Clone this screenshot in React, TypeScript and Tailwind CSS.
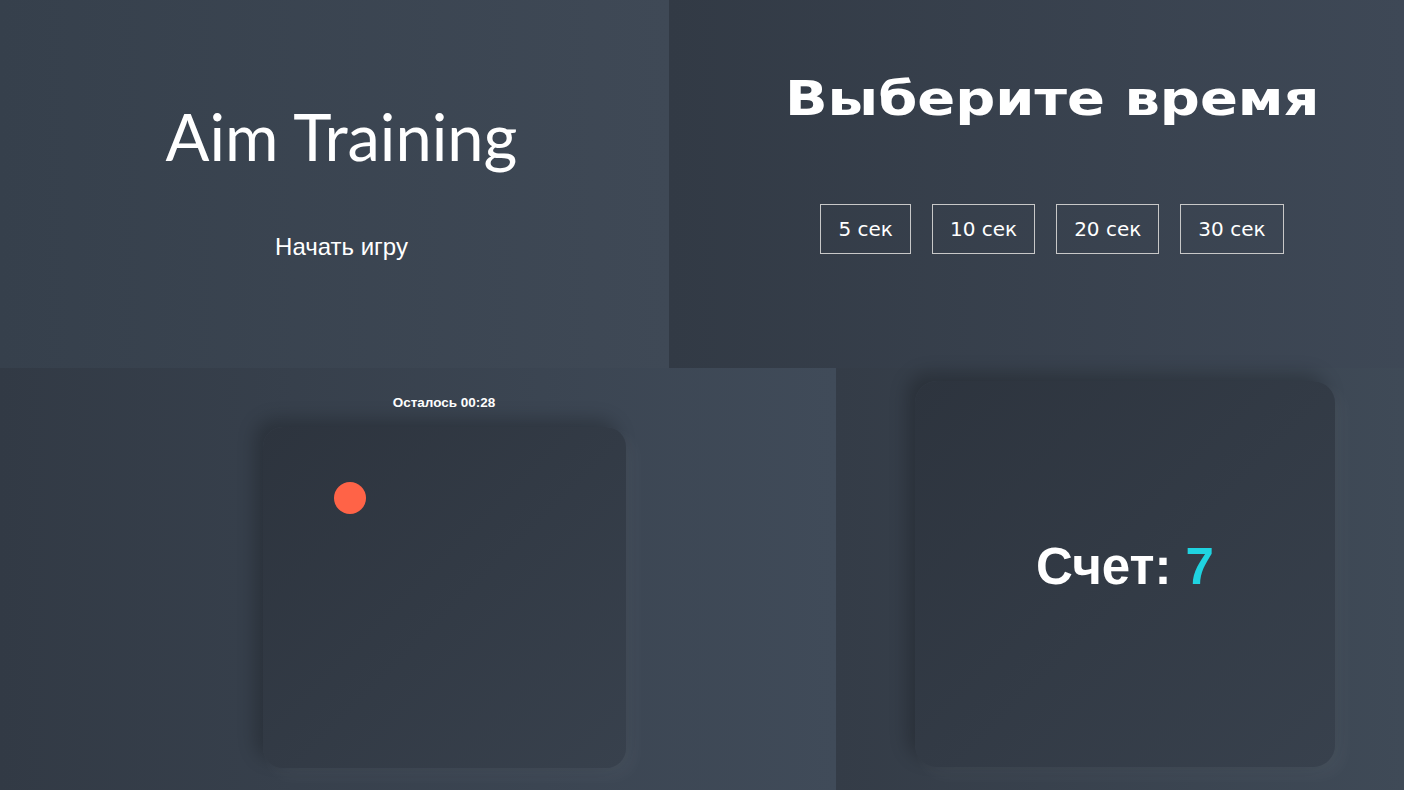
import React from "react";

export default function App() {
  const times = ["5 сек", "10 сек", "20 сек", "30 сек"];
  return (
    <div className="w-[1404px] h-[790px] overflow-hidden flex flex-col">
      <div className="flex h-[368px]">
        <div className="w-[669px] h-full bg-[linear-gradient(90deg,#36404c,#3f4956)] flex flex-col items-center pl-[14px] pt-[96px]">
          <h1 className="text-white text-[65px] leading-[80px] font-['Lato',sans-serif]">Aim Training</h1>
          <button className="mt-[58px] text-white text-[24px] leading-[26px] font-['Liberation_Sans',Arial,sans-serif]">Начать игру</button>
        </div>
        <div className="flex-1 h-full bg-[linear-gradient(90deg,#323a45,#3e4856)] flex flex-col items-center pl-[31px] pt-[68px]">
          <h2 className="text-white text-[48px] leading-[60px] font-bold scale-x-[1.166] font-['DejaVu_Sans',sans-serif]">Выберите время</h2>
          <div className="mt-[76px] flex gap-[21px]">
            {times.map((t) => (
              <button key={t} className="h-[50px] px-[17px] border border-[#c8c8c8] text-white text-[20px] font-['DejaVu_Sans',sans-serif]">
                {t}
              </button>
            ))}
          </div>
        </div>
      </div>
      <div className="flex flex-1">
        <div className="w-[836px] h-full bg-[linear-gradient(90deg,#323a45,#404b59)] flex flex-col items-center pl-[52px] pt-[27px]">
          <div className="text-white text-[13.5px] leading-[16px] font-bold font-['Liberation_Sans',Arial,sans-serif]">Осталось 00:28</div>
          <div className="mt-[16px] relative w-[363px] h-[341px] rounded-[20px] bg-[linear-gradient(135deg,#2d343e,#38414d)] shadow-[-8px_-8px_18px_rgba(0,0,0,0.22),8px_8px_18px_rgba(255,255,255,0.04)]">
            <div className="absolute left-[71px] top-[55px] w-[32px] h-[32px] rounded-full bg-[#ff6347]" />
          </div>
        </div>
        <div className="flex-1 h-full bg-[linear-gradient(90deg,#343c47,#3f4a57)] flex flex-col items-center pl-[10px] pt-[13px]">
          <div className="w-[420px] h-[386px] rounded-[22px] bg-[linear-gradient(135deg,#2d343e,#38414d)] shadow-[-8px_-8px_18px_rgba(0,0,0,0.22),8px_8px_18px_rgba(255,255,255,0.04)] flex items-center justify-center pb-[14px]">
            <div className="text-white text-[51px] leading-[56px] font-bold font-['Liberation_Sans',Arial,sans-serif]">
              Счет: <span className="text-[#1fd3e0]">7</span>
            </div>
          </div>
        </div>
      </div>
    </div>
  );
}
